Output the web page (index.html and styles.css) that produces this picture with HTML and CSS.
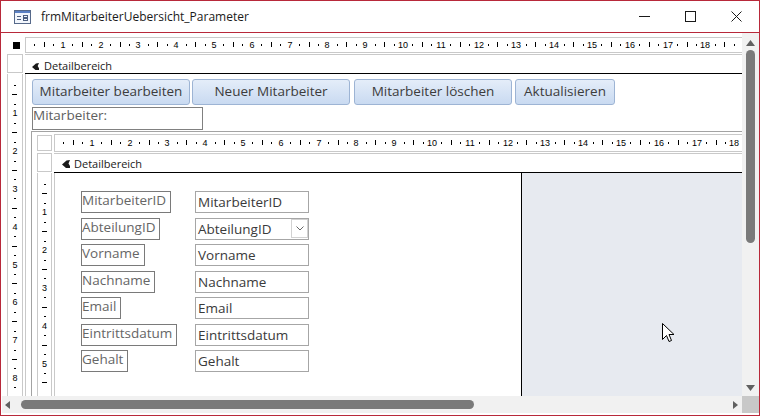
FILE: index.html
```html
<!DOCTYPE html>
<html lang="de">
<head>
    <meta charset="UTF-8">
    <title>frmMitarbeiterUebersicht_Parameter</title>
    <link rel="stylesheet" href="styles.css">
</head>
<body>
    <div class="window">
        <div class="titlebar">
            <svg class="app-icon" width="17" height="14" viewBox="0 0 17 14">
                <rect x="0.5" y="0.5" width="16" height="13" fill="#f2f6fc" stroke="#56698a"/>
                <rect x="1" y="1" width="15" height="2" fill="#5b80c4"/>
                <line x1="3" y1="6.5" x2="7" y2="6.5" stroke="#4d5f80"/>
                <line x1="3" y1="9.5" x2="7" y2="9.5" stroke="#4d5f80"/>
                <rect x="9.5" y="5.5" width="4" height="2" fill="none" stroke="#4d5f80"/>
                <rect x="9.5" y="8.5" width="4" height="2" fill="none" stroke="#4d5f80"/>
            </svg>
            <span class="title">frmMitarbeiterUebersicht_Parameter</span>
            <div class="caption-buttons">
                <span class="cap"><svg width="11" height="11" viewBox="0 0 11 11"><line x1="0" y1="5.5" x2="11" y2="5.5" stroke="#1a1a1a"/></svg></span>
                <span class="cap"><svg width="11" height="11" viewBox="0 0 11 11"><rect x="0.5" y="0.5" width="10" height="10" fill="none" stroke="#1a1a1a"/></svg></span>
                <span class="cap"><svg width="11" height="11" viewBox="0 0 11 11"><path d="M0.5 0.5 L10.5 10.5 M10.5 0.5 L0.5 10.5" stroke="#1a1a1a"/></svg></span>
            </div>
        </div>

        <div class="client">
            <div class="workspace">
                <div class="designer outer">
                    <div class="corner"><span class="form-selector"></span></div>
                    <div class="ruler h-ruler"></div>
                    <div class="selector"></div>
                    <div class="section-bar">
                        <svg class="section-icon" width="7" height="7" viewBox="0 0 8 8"><path d="M0 4.5 L4.5 0.5 L8 0 L6.5 3.5 L8 6 L8 8 L4 8 Z" fill="#1a1a1a"/></svg>
                        Detailbereich
                    </div>
                    <div class="ruler v-ruler"></div>
                    <div class="detail">
                        <div class="button-row">
                            <button class="cmd cmd-edit">Mitarbeiter bearbeiten</button>
                            <button class="cmd cmd-new">Neuer Mitarbeiter</button>
                            <button class="cmd cmd-del">Mitarbeiter löschen</button>
                            <button class="cmd cmd-refresh">Aktualisieren</button>
                        </div>
                        <div class="sub-label">Mitarbeiter:</div>

                        <div class="subform">
                            <div class="designer inner">
                                <div class="selector"></div>
                                <div class="ruler h-ruler"></div>
                                <div class="selector"></div>
                                <div class="section-bar">
                                    <svg class="section-icon" width="8" height="8" viewBox="0 0 8 8"><path d="M0 4.5 L4.5 0.5 L8 0 L6.5 3.5 L8 6 L8 8 L4 8 Z" fill="#1a1a1a"/></svg>
                                    Detailbereich
                                </div>
                                <div class="ruler v-ruler"></div>
                                <div class="detail">
                                    <div class="canvas">
                                        <div class="fields">
                                            <span class="lbl">MitarbeiterID</span><span class="txt">MitarbeiterID</span>
                                            <span class="lbl">AbteilungID</span>
                                            <span class="txt combo">AbteilungID<span class="drop"><svg width="8" height="5" viewBox="0 0 8 5"><polyline points="0.5,0.5 4,4 7.5,0.5" fill="none" stroke="#666"/></svg></span></span>
                                            <span class="lbl">Vorname</span><span class="txt">Vorname</span>
                                            <span class="lbl">Nachname</span><span class="txt">Nachname</span>
                                            <span class="lbl">Email</span><span class="txt">Email</span>
                                            <span class="lbl">Eintrittsdatum</span><span class="txt">Eintrittsdatum</span>
                                            <span class="lbl">Gehalt</span><span class="txt">Gehalt</span>
                                        </div>
                                    </div>
                                    <div class="canvas-rest">
                                        <svg class="cursor" width="13" height="20" viewBox="0 0 13 20"><path d="M0.5 0.5 L0.5 16.5 L4.5 12.5 L7 18.5 L9.5 17.5 L7 11.5 L12 11.5 Z" fill="#fff" stroke="#000" stroke-linejoin="round"/></svg>
                                    </div>
                                </div>
                            </div>
                        </div>
                    </div>
                </div>

                <div class="vscroll">
                    <span class="arrow-v"><svg width="9" height="6" viewBox="0 0 9 6"><polygon points="4.5,0 9,6 0,6" fill="#606060"/></svg></span>
                    <span class="thumb-v"></span>
                    <span class="arrow-v arrow-down"><svg width="9" height="6" viewBox="0 0 9 6"><polygon points="0,0 9,0 4.5,6" fill="#606060"/></svg></span>
                </div>
            </div>

            <div class="hscroll-row">
                <div class="hscroll">
                    <span class="arrow-h"><svg width="5" height="8" viewBox="0 0 5 8"><polygon points="5,0 5,8 0,4" fill="#606060"/></svg></span>
                    <span class="thumb-h"></span>
                    <span class="arrow-h arrow-right"><svg width="5" height="8" viewBox="0 0 5 8"><polygon points="0,0 5,4 0,8" fill="#606060"/></svg></span>
                </div>
                <div class="scroll-corner"></div>
            </div>
        </div>
    </div>

    <script>
        // 1 cm at 96 dpi
        const CM = 37.8;

        function addMark(ruler, q, pos, prop) {
            const mark = document.createElement("span");
            if (q % 4 === 0) {
                mark.className = "num";
                mark.textContent = q / 4;
            } else if (q % 2 === 0) {
                mark.className = "tick half";
            } else {
                mark.className = "tick quarter";
            }
            mark.style[prop] = Math.round(pos) + "px";
            ruler.appendChild(mark);
        }

        document.querySelectorAll(".h-ruler").forEach(ruler => {
            const width = ruler.clientWidth;
            for (let q = 1; q * CM / 4 + 4 < width; q++) {
                addMark(ruler, q, q * CM / 4 - 1, "left");
            }
        });

        document.querySelectorAll(".v-ruler").forEach(ruler => {
            const height = ruler.clientHeight;
            for (let q = 1; q * CM / 4 + 6 < height; q++) {
                addMark(ruler, q, q * CM / 4 + 1.5, "top");
            }
        });
    </script>
</body>
</html>
```

FILE: styles.css
```css
* {
    box-sizing: border-box;
}
body {
    margin: 0;
    background-color: #fff;
    font-family: "Open Sans", "Noto Sans", sans-serif;
    color: #333;
}
.window {
    width: 760px;
    height: 416px;
    border: 1px solid #b8293a;
    background-color: #fff;
    overflow: hidden;
}

/* title bar */
.titlebar {
    height: 32px;
    border-bottom: 1px solid #b8293a;
    display: flex;
    align-items: center;
    padding-left: 13px;
}
.app-icon {
    display: block;
    margin-top: 1px;
}
.title {
    margin-left: 10px;
    font-size: 12px;
    color: #1a1a1a;
}
.caption-buttons {
    margin-left: auto;
    display: flex;
    height: 100%;
}
.cap {
    width: 46px;
    display: flex;
    align-items: center;
    justify-content: center;
}
.cap svg {
    display: block;
}

/* client area */
.client {
    height: 382px;
}
.workspace {
    display: flex;
    height: 363px;
}

.designer {
    display: grid;
}
.designer.outer {
    width: 741px;
    flex: none;
    padding: 4px 0 0 6px;
    grid-template-columns: 16px 717px;
    grid-template-rows: 17px 20px 1fr;
    column-gap: 2px;
}
.designer.inner {
    grid-template-columns: 15px 1fr;
    grid-template-rows: 19px 20px 1fr;
    column-gap: 2px;
    height: 100%;
}

.corner {
    display: flex;
    align-items: center;
    padding-left: 6px;
}
.form-selector {
    width: 7px;
    height: 7px;
    background-color: #000;
}
.selector {
    border: 1px solid #c9c9c9;
    margin-bottom: 1px;
}
.inner .selector:first-child {
    margin-top: 1px;
    margin-bottom: 2px;
}

/* rulers */
.ruler {
    position: relative;
    overflow: hidden;
    background-color: #fff;
}
.h-ruler {
    border: 1px solid #c9c9c9;
    border-right: none;
}
.outer .h-ruler {
    height: 16px;
}
.inner .h-ruler {
    height: 18px;
}
.v-ruler {
    border-left: 1px solid #c9c9c9;
    border-right: 1px solid #c9c9c9;
}
.tick {
    position: absolute;
    background-color: #000;
}
.num {
    position: absolute;
    font-family: "Liberation Sans", Arial, sans-serif;
    font-size: 9px;
    line-height: 9px;
    color: #000;
}
.h-ruler .tick {
    width: 1px;
    top: 50%;
}
.h-ruler .quarter {
    height: 2px;
    margin-top: -1px;
}
.h-ruler .half {
    height: 5px;
    margin-top: -3px;
}
.h-ruler .num {
    top: 50%;
    transform: translate(-50%, -50%);
}
.v-ruler .tick {
    height: 1px;
    left: 50%;
}
.v-ruler .quarter {
    width: 2px;
    margin-left: -1px;
}
.v-ruler .half {
    width: 5px;
    margin-left: -3px;
}
.v-ruler .num {
    left: 50%;
    transform: translate(-50%, -50%);
}

/* section header */
.section-bar {
    border-top: 1px solid #c9c9c9;
    border-bottom: 1px solid #000;
    display: flex;
    align-items: flex-start;
    font-size: 11px;
    line-height: 16px;
    color: #1a1a1a;
}
.outer .section-bar {
    padding: 3px 0 0 7px;
}
.inner .section-bar {
    padding: 2px 0 0 8px;
}
.section-icon {
    display: block;
    margin: 5px 5px 0 0;
}
.inner .section-icon {
    margin: 4px 4px 0 0;
}

/* outer detail */
.outer > .detail {
    border-left: 1px solid #c9c9c9;
    padding: 5px 0 0 5px;
    overflow: hidden;
}
.button-row {
    display: flex;
    margin-left: 1px;
    height: 26px;
}
.cmd {
    height: 26px;
    padding: 0 0 2px;
    border: 1px solid #9db4d4;
    border-radius: 3px;
    background: linear-gradient(#e4edf9, #c9daf1);
    font-family: "Open Sans", "Noto Sans", sans-serif;
    font-size: 13.5px;
    color: #3c3c3c;
}
.cmd-edit {
    width: 158px;
}
.cmd-new {
    width: 158px;
    margin-left: 2px;
}
.cmd-del {
    width: 158px;
    margin-left: 4px;
}
.cmd-refresh {
    width: 100px;
    margin-left: 3px;
}
.sub-label {
    width: 171px;
    height: 23px;
    margin: 2px 0 0 1px;
    border: 1px solid #808080;
    font-size: 13.5px;
    line-height: 14px;
    padding-top: 0;
    color: #5e5e5e;
}

/* the subform runs on past the visible edge, so no right/bottom border */
.subform {
    width: 711px;
    height: 265px;
    margin-top: 1px;
    border: 1px solid #a3a3a3;
    border-right: none;
    border-bottom: none;
    padding: 2px 0 0 5px;
}

/* inner detail */
.inner > .detail {
    display: flex;
    border-left: 1px solid #c9c9c9;
}
.canvas {
    width: 467px;
    border-right: 1px solid #000;
    padding: 18px 0 0 26px;
}
.canvas-rest {
    flex: 1;
    position: relative;
    background-color: #e7eaf0;
}
.cursor {
    position: absolute;
    left: 140px;
    top: 150px;
}

.fields {
    display: grid;
    grid-template-columns: 114px 114px;
    grid-auto-rows: 22px;
    row-gap: 4.5px;
    font-size: 13.5px;
}
.lbl {
    justify-self: start;
    border: 1px solid #7a7a7a;
    padding: 0 4px 0 0;
    line-height: 16px;
    color: #666;
}
.txt {
    border: 1px solid #a6a6a6;
    padding-left: 2px;
    line-height: 20px;
    color: #3a3a3a;
}
.combo {
    display: flex;
    justify-content: space-between;
}
.drop {
    width: 17px;
    height: 19px;
    border: 1px solid #d2d2d2;
    display: flex;
    align-items: center;
    justify-content: center;
}
.drop svg {
    display: block;
}

/* scrollbars */
.vscroll {
    width: 17px;
    flex: none;
    background-color: #f1f1f1;
    display: flex;
    flex-direction: column;
}
.arrow-v {
    height: 17px;
    display: flex;
    align-items: center;
    justify-content: center;
    padding-top: 2px;
}
.arrow-v svg {
    display: block;
}
.arrow-down {
    margin-top: auto;
    padding-top: 0;
}
.thumb-v {
    width: 9px;
    height: 193px;
    margin: 0 0 0 4px;
    border-radius: 5px;
    background-color: #7a7a7a;
}

.hscroll-row {
    display: flex;
    height: 17px;
}
.hscroll {
    width: 740px;
    margin-left: 1px;
    background-color: #f1f1f1;
    display: flex;
    align-items: center;
}
.arrow-h {
    margin-left: 3px;
}
.arrow-h svg {
    display: block;
}
.thumb-h {
    width: 453px;
    height: 9px;
    margin-left: 11px;
    border-radius: 5px;
    background-color: #7a7a7a;
}
.arrow-right {
    margin-left: auto;
    margin-right: 4px;
}
.scroll-corner {
    width: 17px;
    background-color: #c8c8c8;
}
```
